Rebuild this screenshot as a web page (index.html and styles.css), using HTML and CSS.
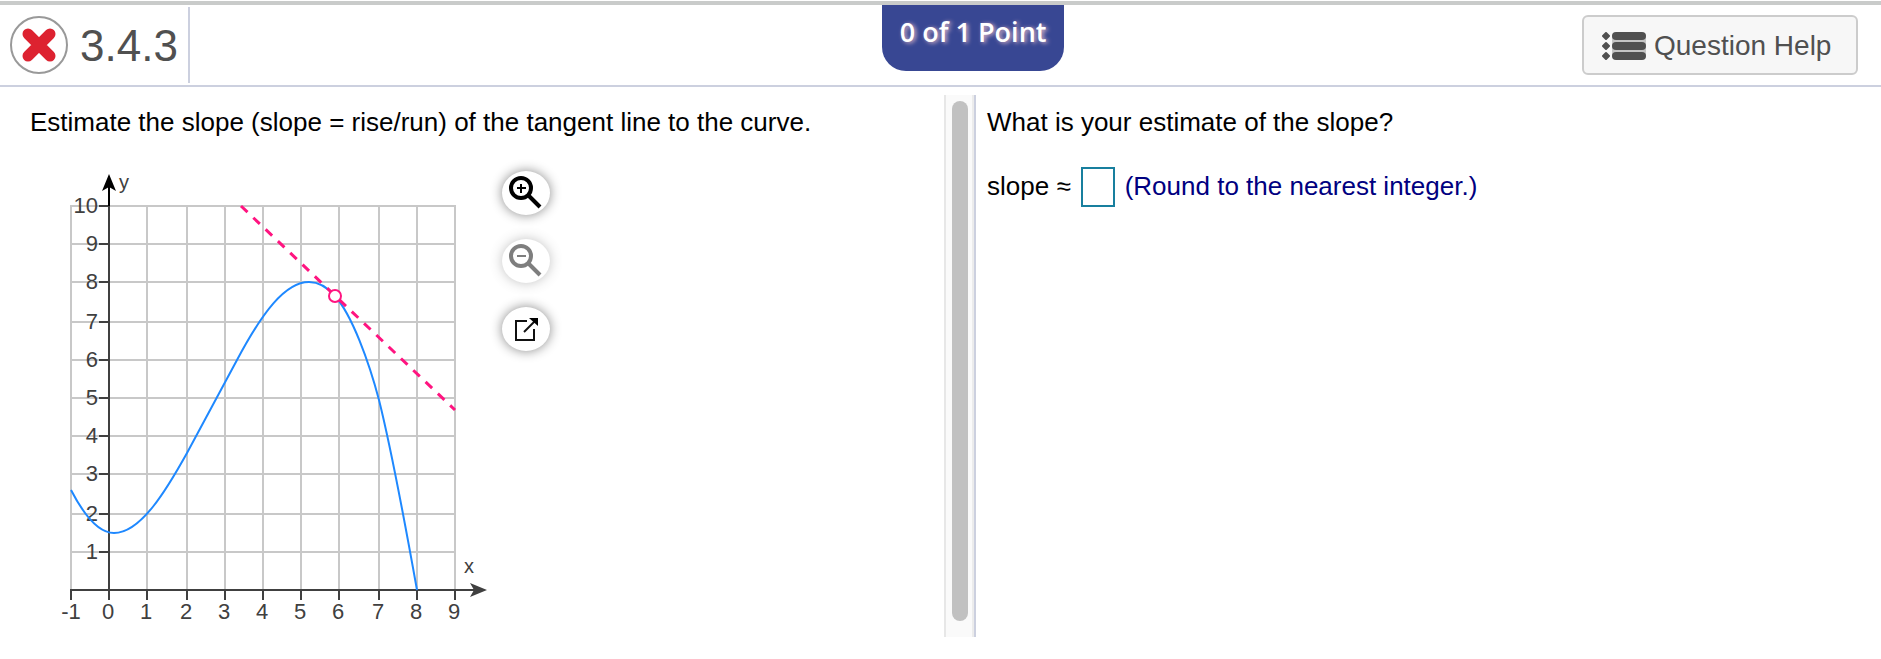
FILE: index.html
```html
<!DOCTYPE html>
<html lang="en">
<head>
    <meta charset="UTF-8">
    <meta name="viewport" content="width=device-width, initial-scale=1.0">
    <title>3.4.3</title>

    <link rel="stylesheet" href="styles.css">
</head>

<body>

  <header class="header">

    <div class="exercise">
      <svg class="wrongIcon" width="58" height="58" viewBox="0 0 58 58" role="img" aria-label="Incorrect">
        <circle cx="29" cy="29" r="28" fill="#fff" stroke="#999" stroke-width="2"/>
        <path d="M18 18 L40 40 M40 18 L18 40" stroke="#dd2230" stroke-width="11" stroke-linecap="round"/>
      </svg>
      <h1 class="number">3.4.3</h1>
    </div>

    <div class="points">0 of 1 Point</div>

    <button class="btnHelp" type="button">
      <svg width="44" height="28" viewBox="0 0 44 28" fill="#505050" aria-hidden="true">
        <rect x="10" y="3" width="34" height="22" fill="#c4c4c4"/>
        <path d="M4 1 L7 4 L4 7 L1 4 Z M4 11 L7 14 L4 17 L1 14 Z M4 21 L7 24 L4 27 L1 24 Z" stroke="#505050" stroke-width="2" stroke-linejoin="round"/>
        <rect x="10" y="0" width="34" height="8" rx="4"/>
        <rect x="10" y="10" width="34" height="8" rx="4"/>
        <rect x="10" y="20" width="34" height="8" rx="4"/>
      </svg>
      Question Help
    </button>

  </header>

  <main class="content">

    <section class="question">
      <p class="text">Estimate the slope (slope = rise/run) of the tangent line to the curve.</p>

      <div class="graphArea">

        <svg class="graph" width="430" height="460" viewBox="0 0 430 460" role="img" aria-label="Curve with its tangent line">
          <path class="grid" d="M11 35V420 M49 36V420 M87 36V420 M127 36V420 M165 36V420 M203 36V420 M241 36V420 M279 36V420 M319 36V420 M357 36V420 M395 35V420
            M11 36H395 M11 74H395 M11 112H395 M11 152H395 M11 190H395 M11 228H395 M11 266H395 M11 304H395 M11 344H395 M11 382H395"/>

          <!-- numbers -->
          <g class="numbers numbersY">
            <text x="38" y="43">10</text>
            <text x="38" y="81">9</text>
            <text x="38" y="119">8</text>
            <text x="38" y="159">7</text>
            <text x="38" y="197">6</text>
            <text x="38" y="235">5</text>
            <text x="38" y="273">4</text>
            <text x="38" y="311">3</text>
            <text x="38" y="351">2</text>
            <text x="38" y="389">1</text>
          </g>
          <g class="numbers numbersX">
            <text x="11" y="449">-1</text>
            <text x="48" y="449">0</text>
            <text x="86" y="449">1</text>
            <text x="126" y="449">2</text>
            <text x="164" y="449">3</text>
            <text x="202" y="449">4</text>
            <text x="240" y="449">5</text>
            <text x="278" y="449">6</text>
            <text x="318" y="449">7</text>
            <text x="356" y="449">8</text>
            <text x="394" y="449">9</text>
          </g>
          <text class="axisName" x="59" y="19">y</text>
          <text class="axisName" x="404" y="403">x</text>

          <!-- axes -->
          <path class="axis" d="M10 420H415 M49 36V430
            M39 36H49 M39 74H49 M39 112H49 M39 152H49 M39 190H49 M39 228H49 M39 266H49 M39 304H49 M39 344H49 M39 382H49
            M11 420V430 M87 420V430 M127 420V430 M165 420V430 M203 420V430 M241 420V430 M279 420V430 M319 420V430 M357 420V430 M395 420V430"/>
          <path d="M427 420 L410 413 L414 420 L410 427 Z" fill="#404040"/>
          <path d="M49 36V14" stroke="#000" stroke-width="2"/>
          <path d="M49 4 L42 21 L49 17 L56 21 Z"/>

          <path class="curve" d="M11 320 C25 347 39 363 54 363 C81 363 107 319 127 283 C143 253 160 222 177 190 C202 143 225 112 249 112 C259 112 268 118 275 126 C292 145 309 192 319 230 C332 282 345 353 357 420"/>
          <path class="tangent" d="M181 36 L395 240"/>
          <circle class="point" cx="275" cy="126" r="6"/>
        </svg>

        <div class="tools">
          <button class="btnTool" type="button" aria-label="Zoom in">
            <svg width="48" height="44" viewBox="0 0 48 44" fill="none" stroke="#000">
              <circle cx="19" cy="17" r="10" stroke-width="4"/>
              <path d="M27 25 L38 36" stroke-width="4"/>
              <path d="M15 17H24 M19 13V22" stroke-width="2"/>
            </svg>
          </button>
          <button class="btnTool" type="button" aria-label="Zoom out" disabled>
            <svg width="48" height="44" viewBox="0 0 48 44" fill="none" stroke="#000">
              <circle cx="19" cy="17" r="10" stroke-width="4"/>
              <path d="M27 25 L38 36" stroke-width="4"/>
              <path d="M15 17H24" stroke-width="2"/>
            </svg>
          </button>
          <button class="btnTool" type="button" aria-label="Open graph">
            <svg width="48" height="44" viewBox="0 0 48 44" fill="none" stroke="#111">
              <path d="M25 14H14V33H32V22" stroke-width="2"/>
              <path d="M22 25 L33 14" stroke-width="2"/>
              <path d="M27 11H36V19Z" fill="#000" stroke="none"/>
            </svg>
          </button>
        </div>

      </div>
    </section>

    <div class="scroll"><div class="scrollThumb"></div></div>

    <section class="answer">
      <p class="text">What is your estimate of the slope?</p>

      <div class="answerRow">
        <label for="txtSlope">slope ≈</label>
        <input type="text" id="txtSlope" class="txtSlope"/>
        <span class="hint">(Round to the nearest integer.)</span>
      </div>
    </section>

  </main>

</body>
</html>
```

FILE: styles.css
```css
* {
  box-sizing: border-box;
}

body {
  margin: 0;
  padding-top: 1px;
  background: #fff;
  color: #000;
  font-family: "Liberation Sans", Arial, sans-serif;
  font-size: 26px;
  line-height: 30px;
}

/* Header */

.header {
  display: grid;
  grid-template-columns: 108fr 182px 100fr;
  align-items: start;
  height: 86px;
  border-top: 4px solid #c9cbca;
  border-bottom: 2px solid #ccd0df;
}

.exercise {
  display: flex;
  align-items: center;
  gap: 12px;
  width: 190px;
  height: 76px;
  margin-top: 2px;
  padding-left: 10px;
  border-right: 2px solid #ccd0df;
}

.wrongIcon {
  flex: none;
}

.number {
  margin: 0;
  padding-top: 2px;
  color: #505050;
  font-size: 44px;
  font-weight: normal;
  line-height: 50px;
}

.points {
  height: 66px;
  padding-top: 12px;
  border-radius: 0 0 24px 24px;
  background: #384793;
  color: #fff;
  font-family: "Open Sans", sans-serif;
  font-size: 27px;
  font-weight: 600;
  text-align: center;
  white-space: nowrap;
  text-shadow: 2px 1px 4px #e0b8c8;
}

.btnHelp {
  display: flex;
  align-items: center;
  justify-self: end;
  gap: 8px;
  width: 276px;
  height: 60px;
  margin: 10px 23px 0 0;
  padding: 2px 0 0 18px;
  border: 2px solid #ccc;
  border-radius: 6px;
  background: #f7f7f7;
  color: #505050;
  font-family: inherit;
  font-size: 28px;
}

/* Question and answer */

.content {
  display: grid;
  grid-template-columns: 944fr 32px 905fr;
  min-height: calc(100vh - 117px);
  margin: 8px 0 22px;
}

.text {
  margin: 0;
}

.question {
  padding: 12px 0 0 30px;
}

.graphArea {
  display: flex;
  align-items: flex-start;
  gap: 12px;
  margin: 33px 0 0 30px;
}

.grid {
  stroke: #c8c8c8;
  stroke-width: 2;
}

.numbers {
  fill: #404040;
  font-size: 22px;
}

.numbersY {
  text-anchor: end;
}

.numbersX {
  text-anchor: middle;
}

.axisName {
  fill: #404040;
  font-size: 20px;
}

.axis {
  stroke: #404040;
  stroke-width: 2;
}

.curve {
  fill: none;
  stroke: #1e88ff;
  stroke-width: 2;
}

.tangent {
  stroke: #ff1480;
  stroke-width: 3;
  stroke-dasharray: 9 8;
}

.point {
  fill: #fff;
  stroke: #ff1480;
  stroke-width: 2;
}

.tools {
  display: flex;
  flex-direction: column;
  gap: 24px;
  padding-top: 1px;
}

.btnTool {
  width: 48px;
  height: 44px;
  padding: 0;
  border: none;
  border-radius: 50%;
  background: #fff;
  box-shadow: 0 0 12px #888;
}

.btnTool svg {
  display: block;
}

.btnTool:disabled {
  opacity: 0.5;
}

.scroll {
  display: flex;
  padding: 6px 4px 16px 6px;
  border-left: 2px solid #e7e7e7;
  border-right: 2px solid #ccd0df;
  background: #fafafa;
  box-shadow: inset -2px 0 #ececec;
}

.scrollThumb {
  width: 16px;
  border-radius: 8px;
  background: #c1c1c1;
}

.answer {
  padding: 12px 0 0 11px;
}

.answerRow {
  display: flex;
  align-items: center;
  gap: 10px;
  margin-top: 30px;
}

.answerRow label,
.hint {
  padding-bottom: 2px;
}

.txtSlope {
  width: 34px;
  height: 40px;
  padding: 2px;
  border: 2px solid #187f9e;
  background: #fff;
  font-family: inherit;
  font-size: 26px;
}

.hint {
  color: #000080;
}
```
